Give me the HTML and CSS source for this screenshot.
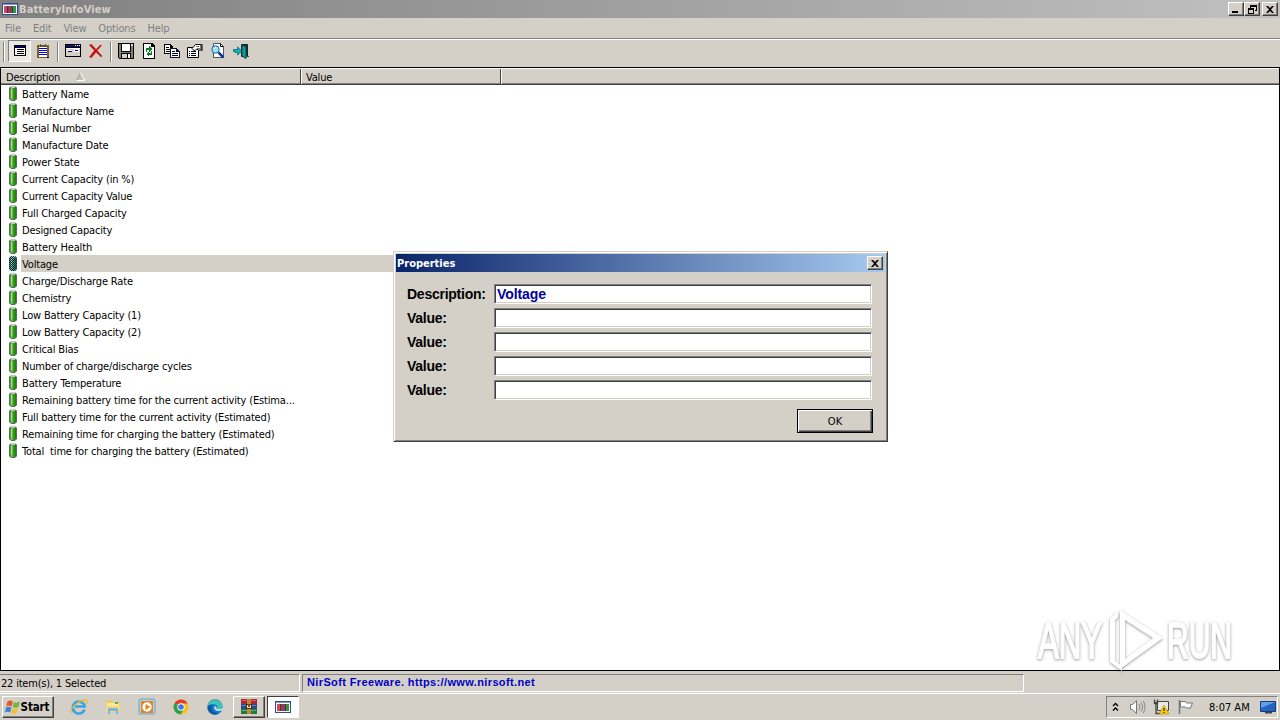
FILE: index.html
```html
<!DOCTYPE html>
<html lang="en">
<head>
    <meta charset="UTF-8">
    <meta name="viewport" content="width=device-width, initial-scale=1.0">
    <title>BatteryInfoView</title>
    <link rel="stylesheet" href="styles.css">
</head>
<body>
    <!-- shared icons -->
    <svg class="defs" width="0" height="0">
        <defs>
            <linearGradient id="green" x1="0" x2="1" y1="0" y2="0">
                <stop offset="0" stop-color="#2c7c1c"/>
                <stop offset="0.35" stop-color="#7cc860"/>
                <stop offset="0.55" stop-color="#38a01c"/>
                <stop offset="1" stop-color="#226c14"/>
            </linearGradient>
            <pattern id="dots" width="2" height="2" patternUnits="userSpaceOnUse">
                <rect width="1" height="1" fill="#0a246a"/>
                <rect x="1" y="1" width="1" height="1" fill="#0a246a"/>
            </pattern>
            <symbol id="battery" viewBox="0 0 10 16">
                <path d="M3 1.500h4l1.500 1.500v11l-1.500 1.500H3L1.500 14V3z" fill="url(#green)" stroke="#56705a" stroke-width="1"/>
                <path d="M3 1h4v2H3z" fill="#c4c8c4"/>
                <path d="M3.500 4v9" stroke="#a6e48c"/>
            </symbol>
            <symbol id="app" viewBox="0 0 16 14">
                <rect x="0.500" y="1.500" width="15" height="11" fill="#fff" stroke="#34508c"/>
                <path d="M1 2.500h14" stroke="#7c98d0"/>
                <rect x="2" y="4" width="3" height="7" fill="#d04858"/>
                <rect x="6" y="4" width="4" height="7" fill="#a03850"/>
                <rect x="11" y="4" width="3" height="7" fill="#2c9a38"/>
                <path d="M5.500 4v7M10.500 4v7" stroke="#303868"/>
            </symbol>
            <symbol id="close" viewBox="0 0 8 7">
                <path d="M0 0h2l2 2 2-2h2L5 3.500 8 7H6L4 5 2 7H0l3-3.500z" fill="#000"/>
            </symbol>
        </defs>
    </svg>

    <div class="window">
        <div class="titlebar">
            <svg class="app-icon" width="16" height="14"><use href="#app"/></svg>
            <span class="title-text">BatteryInfoView</span>
            <div class="title-buttons">
                <button class="win-btn"><svg width="8" height="8"><path d="M0 6h6v2H0z"/></svg></button>
                <button class="win-btn"><svg width="9" height="9" shape-rendering="crispEdges"><path d="M2 0h7v6H7V5h1V2H3v1H2z"/><path d="M0 3h6v6H0zM1 5v3h4V5z" fill-rule="evenodd"/></svg></button>
                <button class="win-btn gap"><svg width="8" height="7"><use href="#close"/></svg></button>
            </div>
        </div>

        <div class="menubar">
            <span>File</span>
            <span>Edit</span>
            <span>View</span>
            <span>Options</span>
            <span>Help</span>
        </div>

        <div class="toolbar">
            <div class="sep"></div>
            <div class="tool pressed">
                <svg width="16" height="16" shape-rendering="crispEdges"><path d="M2 2h12v11H2z" fill="#000"/><path d="M3 5h10v7H3z" fill="#fff"/><path d="M3 3h10v1H3z" fill="#0000a0"/><path d="M5 6h7v1H5zM5 8h7v1H5zM5 10h7v1H5z"/></svg>
            </div>
            <div class="tool">
                <svg width="16" height="16" shape-rendering="crispEdges"><path d="M2 2h12v13H2z" fill="#806020"/><path d="M4 4h8v10H4z" fill="#fff"/><path d="M5 1h6v3H5z" fill="#555"/><path d="M6 1h4v1H6z" fill="#e8d850"/><path d="M4 5h8v1H4zM4 7h8v1H4zM4 9h8v1H4zM4 11h8v1H4z" fill="#0000e0"/><path d="M12 14h2v1h-2z" fill="#000080"/></svg>
            </div>
            <div class="sep wide"></div>
            <div class="tool">
                <svg width="16" height="16" shape-rendering="crispEdges"><path d="M0 1h16v13H0z"/><path d="M1 5h14v8H1z" fill="#d4d0c8"/><path d="M1 2h14v2H1z" fill="#101070"/><path d="M10 2h1v1h-1zM12 2h1v1h-1zM14 2h1v1h-1z" fill="#fff"/><path d="M1 5h14v1H1zM2 7h5v1H2zM9 6h5v3H9z" fill="#fff"/><path d="M3 8h4v1H3zM10 7h3v1h-3z" fill="#0000a0"/></svg>
            </div>
            <div class="tool">
                <svg width="16" height="16"><path d="M1.500 2l2-.5L8 6.500l4.500-4.500 1 .5L9 7.500l5 5.500-1 .8L8 9l-4.500 5.500L1.500 14l5-6.500z" fill="#d80808" stroke="#a80000" stroke-width="0.500"/></svg>
            </div>
            <div class="sep wide"></div>
            <div class="tool">
                <svg width="16" height="16" shape-rendering="crispEdges"><path d="M0 0h15l1 1v15H1l-1-1z"/><path d="M1 1h2v8h10V1h2v14H1z" fill="#808078"/><path d="M4 1h8v7H4z" fill="#fff"/><path d="M13 1h2v2h-2z" fill="#ddd"/><path d="M3 10h10v5H3z"/><path d="M4 11h5v4H4z" fill="#d4d0c8"/><path d="M10 11h2v4h-2z" fill="#fff"/></svg>
            </div>
            <div class="tool">
                <svg width="16" height="16" shape-rendering="crispEdges"><path d="M2 0h9l3 3v13H2z"/><path d="M3 1h7v3h3v11H3z" fill="#fff"/><path d="M10 1h1v2h2v1h-3z"/><g fill="#088028"><path d="M5 5h3V3l3 3-3 3V7H6v2H5z"/><path d="M11 12H8v2l-3-3 3-3v2h2V8h1z"/></g></svg>
            </div>
            <div class="tool">
                <svg width="16" height="16" shape-rendering="crispEdges"><path d="M0 1h6l3 3v7H0z"/><path d="M1 2h5v3h2v5H1z" fill="#fff"/><path d="M2 4h3v1H2zM2 6h5v1H2zM2 8h5v1H2z"/><path d="M6 5h6l4 4v6H6z" fill="#101040"/><path d="M7 6h5v3h3v5H7z" fill="#fff"/><path d="M8 8h3v1H8zM8 10h6v1H8zM8 12h6v1H8z"/></svg>
            </div>
            <div class="tool">
                <svg width="16" height="16"><path d="M.5 4.500h11v10H.5z" fill="#fff" stroke="#000"/><path d="M2 8.500h1m1 0h5M2 10.500h1m1 0h5M2 12.500h1m1 0h5" stroke="#000"/><path d="M5 5.500L8.500 1.500h5.500v5.500h-2.500L9.500 6 7.500 8z" fill="#fff" stroke="#000"/><path d="M9 3.500h3M10 5.500h3" stroke="#777"/><path d="M15 1v7" stroke="#000"/></svg>
            </div>
            <div class="tool">
                <svg width="16" height="16"><path d="M3.500.5h7l3 3v11h-10z" fill="#fff" stroke="#555"/><path d="M10.500.5v3h3" fill="none" stroke="#000"/><circle cx="5.500" cy="6.500" r="3.700" fill="#90e4f4" stroke="#2060a0"/><path d="M8.500 9.500l5 5" stroke="#0838a0" stroke-width="2.500"/><path d="M4 6l2-2" stroke="#fff"/></svg>
            </div>
            <div class="tool">
                <svg width="16" height="16"><path d="M8.500 1.500h6v12h-6z" fill="#053c40" stroke="#222"/><path d="M9 2l4 2v11.500L9 13z" fill="#189a9c" stroke="#044"/><path d="M0 6.500h4.500V4L9 8l-4.500 4V9.500H2v-1H0z" fill="#10b0b8" stroke="#056068" stroke-width="0.700"/><path d="M13 13.500h3" stroke="#444"/></svg>
            </div>
        </div>

        <div class="list">
            <div class="list-header">
                <div class="col col-desc"><span>Description</span><svg class="sort" width="10" height="9"><path d="M1 8L4.500 1l4 7z" fill="#c4c0b8"/><path d="M.5 8.500L4.500.5" stroke="#a0a09c"/><path d="M4.500.5l4 8H.5" fill="none" stroke="#fff"/></svg></div>
                <div class="col col-value">Value</div>
            </div>
            <div class="rows">
                <div class="row"><svg width="10" height="16"><use href="#battery"/></svg><span>Battery Name</span></div>
                <div class="row"><svg width="10" height="16"><use href="#battery"/></svg><span>Manufacture Name</span></div>
                <div class="row"><svg width="10" height="16"><use href="#battery"/></svg><span>Serial Number</span></div>
                <div class="row"><svg width="10" height="16"><use href="#battery"/></svg><span>Manufacture Date</span></div>
                <div class="row"><svg width="10" height="16"><use href="#battery"/></svg><span>Power State</span></div>
                <div class="row"><svg width="10" height="16"><use href="#battery"/></svg><span>Current Capacity (in %)</span></div>
                <div class="row"><svg width="10" height="16"><use href="#battery"/></svg><span>Current Capacity Value</span></div>
                <div class="row"><svg width="10" height="16"><use href="#battery"/></svg><span>Full Charged Capacity</span></div>
                <div class="row"><svg width="10" height="16"><use href="#battery"/></svg><span>Designed Capacity</span></div>
                <div class="row"><svg width="10" height="16"><use href="#battery"/></svg><span>Battery Health</span></div>
                <div class="row selected"><svg width="10" height="16"><use href="#battery"/><path d="M3 1h4l2 2v11l-2 2H3l-2-2V3z" fill="url(#dots)"/></svg><span>Voltage</span></div>
                <div class="row"><svg width="10" height="16"><use href="#battery"/></svg><span>Charge/Discharge Rate</span></div>
                <div class="row"><svg width="10" height="16"><use href="#battery"/></svg><span>Chemistry</span></div>
                <div class="row"><svg width="10" height="16"><use href="#battery"/></svg><span>Low Battery Capacity (1)</span></div>
                <div class="row"><svg width="10" height="16"><use href="#battery"/></svg><span>Low Battery Capacity (2)</span></div>
                <div class="row"><svg width="10" height="16"><use href="#battery"/></svg><span>Critical Bias</span></div>
                <div class="row"><svg width="10" height="16"><use href="#battery"/></svg><span>Number of charge/discharge cycles</span></div>
                <div class="row"><svg width="10" height="16"><use href="#battery"/></svg><span>Battery Temperature</span></div>
                <div class="row"><svg width="10" height="16"><use href="#battery"/></svg><span>Remaining battery time for the current activity (Estima...</span></div>
                <div class="row"><svg width="10" height="16"><use href="#battery"/></svg><span>Full battery time for the current activity (Estimated)</span></div>
                <div class="row"><svg width="10" height="16"><use href="#battery"/></svg><span>Remaining time for charging the battery (Estimated)</span></div>
                <div class="row"><svg width="10" height="16"><use href="#battery"/></svg><span>Total&nbsp; time for charging the battery (Estimated)</span></div>
            </div>
        </div>

        <div class="statusbar">
            <div class="panel panel-count">22 item(s), 1 Selected</div>
            <div class="panel panel-link">NirSoft Freeware. https://www.nirsoft.net</div>
        </div>
    </div>

    <div class="taskbar">
        <button class="start">
            <svg width="16" height="16"><path d="M2.500 2.500Q5 .5 8 2.500L6.800 7.500Q4 5.800 1.200 7.500z" fill="#e8582c"/><path d="M9 3q3 1.500 6-.5L13.500 8q-3 1.500-5.700 0z" fill="#6cb83c"/><path d="M1 8.500q2.500-1.700 5.500 0L5.200 13.500Q2.500 12-.2 13.500z" fill="#3c84d8"/><path d="M7.500 9q3 1.500 5.700 0l-1.400 5q-3 1.500-5.600 0z" fill="#f4c030"/></svg>
            <span>Start</span>
        </button>
        <div class="quick">
            <svg width="18" height="18"><path d="M14.500 11.500a6 6 0 1 1 .2-3H5" fill="none" stroke="#39a5e0" stroke-width="2.600"/><path d="M1 15C-1 12 8 2 15 2c3 0 2 3 1 5" fill="none" stroke="#e8b838" stroke-width="1.300"/></svg>
            <svg width="18" height="18"><path d="M2 2h6l1 2h7v10H2z" fill="#ecca68"/><path d="M3 5h12v8H3z" fill="#fae9a4"/><path d="M2 8h14v6H2z" fill="#f2d780"/><path d="M4 16v-5q0-1 1-1h8q1 0 1 1v5h-2v-3H6v3z" fill="#78b8dc"/><path d="M11 4h3v2h-3z" fill="#60a860"/></svg>
            <svg width="18" height="18"><path d="M2 1h14l1 1v13l-1 1H1V2z" fill="#a8d4ec" stroke="#6ca4c8"/><rect x="3" y="3" width="12" height="12" fill="#f08018"/><circle cx="9" cy="9" r="4.700" fill="#fff"/><path d="M7.500 6l5 3-5 3z" fill="#f08018"/></svg>
            <svg width="18" height="18"><circle cx="9" cy="9" r="7.500" fill="#fbc116"/><path d="M9 9L2.500 5.200A7.500 7.500 0 0 1 15.600 5.500H9z" fill="#e33b2e"/><path d="M9 9L2.500 5.200A7.500 7.500 0 0 0 8.600 16.500L12 11z" fill="#2da04c"/><circle cx="9" cy="9" r="3.700" fill="#fff"/><circle cx="9" cy="9" r="2.800" fill="#3c78e8"/></svg>
            <svg width="18" height="18"><circle cx="9" cy="9" r="7.700" fill="#1680d0"/><path d="M1.500 8C3 0 15 0 16.700 8c0 3-3 4-6 3 2-2 0-5-3-5S2 7 1.500 8z" fill="#40c4b0"/><path d="M7 7c-3 3 0 8 6 8-5 4-11 0-11.500-5C2 7 5 6 7 7z" fill="#0c59a4"/><path d="M9 8c-2 3 1 6 6 4.500l2-1V10q-3 2-6.500 1 1-1.500-1.500-3z" fill="#d4e8e8"/></svg>
        </div>
        <div class="task">
            <svg width="18" height="16" shape-rendering="crispEdges"><path d="M1 0h16v5H1z" fill="#a82838"/><path d="M1 5h16v5H1z" fill="#304890"/><path d="M1 10h16v5H1z" fill="#267838"/><path d="M2 1h14v1H2z" fill="#dc6070"/><path d="M2 6h14v1H2z" fill="#6880c8"/><path d="M2 11h14v1H2z" fill="#60b070"/><path d="M7 0h4v15H7z" fill="#c08830"/><path d="M6 5h6v5H6z" fill="#403020"/><path d="M7 6h4v3H7z" fill="#eee0b0"/><path d="M8 5h2v3H8z" fill="#605040"/></svg>
        </div>
        <div class="task active">
            <svg width="16" height="14"><use href="#app"/></svg>
        </div>
        <div class="tray">
            <svg class="chevrons" width="7" height="10"><path d="M1 4l2.500-2.500L6 4M1 8.500L3.500 6 6 8.500" fill="none" stroke="#000" stroke-width="1.400"/></svg>
            <svg class="speaker" width="17" height="16"><path d="M1.500 5.500h2l4-4v13l-4-4h-2z" fill="#fff" stroke="#777"/><path d="M10 5q2 3 0 6M12.300 3.500q3 4.500 0 9M14.300 2q3.500 6 0 12" fill="none" stroke="#888"/></svg>
            <svg class="network" width="17" height="16"><path d="M4.500 2.500h11v9h-11z" fill="#e8e8e8" stroke="#444"/><path d="M1.500.5v4h3v-4M3 4.500v10h5M1 3.500h4" fill="none" stroke="#444" stroke-width="1.300"/><path d="M11 6l5 9H6z" fill="#f8cc10" stroke="#b89000" stroke-width="0.600"/><path d="M11 9v3M11 13v1" stroke="#000"/></svg>
            <svg class="flag" width="17" height="16"><path d="M2.500 1v14" stroke="#777" stroke-width="1.600"/><path d="M3.500 2.500h5l1 1.500h6l-2 5h-4L8.500 8h-5z" fill="#fff" stroke="#777"/></svg>
            <span class="clock">8:07 AM</span>
            <svg class="desktop" width="16" height="14"><path d="M.5 1.500h15v10H.5z" fill="#2464c0" stroke="#183c78"/><path d="M1 2h14L1 8z" fill="#60a0e8"/><path d="M5 12h7v1.500H5z" fill="#444"/></svg>
        </div>
    </div>

    <!-- Properties dialog -->
    <div class="dialog">
        <div class="dialog-title">
            <span>Properties</span>
            <button class="win-btn"><svg width="8" height="7"><use href="#close"/></svg></button>
        </div>
        <div class="dialog-body">
            <div class="field"><label>Description:</label><div class="input">Voltage</div></div>
            <div class="field"><label>Value:</label><div class="input"></div></div>
            <div class="field"><label>Value:</label><div class="input"></div></div>
            <div class="field"><label>Value:</label><div class="input"></div></div>
            <div class="field"><label>Value:</label><div class="input"></div></div>
            <button class="ok"><span>OK</span></button>
        </div>
    </div>

    <!-- watermark -->
    <svg class="watermark" width="204" height="72" viewBox="0 0 204 72">
        <text x="4" y="55" textLength="64" lengthAdjust="spacingAndGlyphs">ANY</text>
        <path d="M86 7L129 35 86 66zM91 17v39l28-21z" fill-rule="evenodd"/>
        <path d="M76 15l8-6v5l-3 3v41l7 5v5L76 59z"/>
        <text x="133" y="55" textLength="65" lengthAdjust="spacingAndGlyphs">RUN</text>
    </svg>
</body>
</html>
```
FILE: styles.css
```css
* {
    box-sizing: border-box;
}

body {
    margin: 0;
    width: 1280px;
    height: 720px;
    overflow: hidden;
    display: flex;
    flex-direction: column;
    background: #d4d0c8;
    color: #000;
    font-family: "DejaVu Sans Condensed", "DejaVu Sans", sans-serif;
    font-stretch: condensed;
    font-size: 11px;
    line-height: 13px;
    white-space: nowrap;
}

svg {
    display: block;
    flex: none;
}

.defs {
    position: absolute;
}

button {
    font: inherit;
    color: #000;
    padding: 0;
    margin: 0;
    display: flex;
    align-items: center;
    justify-content: center;
    background: #d4d0c8;
    border: 1px solid;
    border-color: #fff #404040 #404040 #fff;
    box-shadow: inset -1px -1px #808080;
}

.window {
    height: 693px;
    display: flex;
    flex-direction: column;
}

/* title bar */
.titlebar {
    height: 18px;
    display: flex;
    align-items: center;
    padding: 0 2px;
    background: linear-gradient(to right, #808080, #c0c0c0);
    color: #d4d0c8;
    font-weight: bold;
}

.title-text {
    margin-left: 1px;
    letter-spacing: 0.1px;
}

.title-buttons {
    margin-left: auto;
    display: flex;
}

.win-btn {
    width: 16px;
    height: 14px;
}

.win-btn.gap {
    margin-left: 2px;
}

.menubar {
    height: 20px;
    display: flex;
    align-items: center;
    gap: 12px;
    padding-left: 5px;
    color: #808080;
    letter-spacing: -0.15px;
}

/* toolbar */
.toolbar {
    height: 29px;
    display: flex;
    align-items: flex-start;
    padding: 1px 0 0 3px;
    border-top: 1px solid #808080;
    box-shadow: inset 0 1px #fff;
}

.sep {
    width: 2px;
    height: 20px;
    margin: 2px 3px 0 0;
    border-left: 1px solid #808080;
    border-right: 1px solid #fff;
}

.sep.wide {
    margin: 2px 2px 0 3px;
}

.tool {
    width: 23px;
    height: 22px;
    display: flex;
    align-items: center;
    justify-content: center;
}

.tool.pressed {
    border: 1px solid;
    border-color: #808080 #fff #fff #808080;
    background: #ebe9e4;
}

/* list view */
.list {
    height: 604px;
    border: 1px solid #000;
    background: #fff;
}

.list-header {
    height: 17px;
    display: flex;
    background: #d4d0c8;
    border-top: 1px solid #fff;
    border-bottom: 1px solid #404040;
    box-shadow: inset 0 -1px #808080;
}

.col {
    display: flex;
    align-items: center;
    padding: 1px 0 0 5px;
    border-right: 1px solid #404040;
    box-shadow: 1px 0 #fff;
    letter-spacing: -0.2px;
}

.col-desc {
    width: 300px;
}

.col-value {
    width: 200px;
}

.sort {
    margin-left: 16px;
    margin-top: -2px;
}

.row {
    height: 17px;
    display: flex;
    align-items: flex-start;
    padding-left: 7px;
    letter-spacing: -0.16px;
}

.row span {
    width: 479px;
    height: 17px;
    line-height: 17px;
    margin-left: 3px;
    padding: 1px 0 0 1px;
}

.row.selected span {
    background: #d4d0c8;
}

/* status bar */
.statusbar {
    height: 22px;
    display: flex;
    gap: 2px;
    padding-top: 3px;
}

.panel {
    height: 18px;
    padding: 2px 0 0 1px;
    border: 1px solid;
    border-color: #808080 #fff #fff #808080;
}

.panel-count {
    width: 300px;
    border-left: none;
    letter-spacing: -0.2px;
}

.panel-link {
    width: 722px;
    padding: 1px 0 0 4px;
    font-family: "Liberation Sans", Arial, sans-serif;
    font-weight: bold;
    letter-spacing: 0.37px;
    color: #0000c8;
}

/* taskbar */
.taskbar {
    height: 27px;
    display: flex;
    align-items: flex-start;
    padding: 2px 2px 0;
    border-top: 1px solid #fff;
}

.start {
    width: 52px;
    height: 22px;
    padding-right: 2px;
    font-weight: bold;
    font-size: 11.5px;
    letter-spacing: -0.1px;
}

.quick {
    display: flex;
    gap: 16px;
    padding: 2px 0 0 16px;
}

.task {
    width: 32px;
    height: 22px;
    margin-left: 9px;
    display: flex;
    align-items: center;
    justify-content: center;
    border: 1px solid;
    border-color: #fff #404040 #404040 #fff;
    box-shadow: inset -1px -1px #808080;
}

.task.active {
    margin-left: 2px;
    background: #fff;
    border-color: #404040 #fff #fff #404040;
    box-shadow: none;
}

.tray {
    width: 172px;
    height: 22px;
    margin-left: auto;
    display: flex;
    align-items: center;
    border: 1px solid;
    border-color: #808080 #fff #fff #808080;
    padding-left: 5px;
}

.speaker {
    margin-left: 10px;
}

.network,
.flag {
    margin-left: 7px;
}

.clock {
    margin-left: 15px;
}

.desktop {
    margin-left: 10px;
}

/* dialog */
.dialog {
    position: absolute;
    left: 393px;
    top: 251px;
    width: 495px;
    height: 191px;
    padding: 2px;
    background: #d4d0c8;
    border: 1px solid;
    border-color: #d4d0c8 #404040 #404040 #d4d0c8;
    box-shadow: inset 1px 1px #fff, inset -1px -1px #808080;
}

.dialog-title {
    height: 18px;
    display: flex;
    align-items: center;
    justify-content: space-between;
    padding: 0 2px 0 1px;
    background: linear-gradient(to right, #0a246a, #a6caf0);
    color: #fff;
    font-weight: bold;
}

.dialog-body {
    padding: 12px 12px 0 11px;
}

.field {
    display: flex;
    align-items: center;
    height: 20px;
    margin-bottom: 4px;
    font-family: "Liberation Sans", Arial, sans-serif;
    font-size: 14px;
    font-weight: bold;
}

.field label {
    width: 87px;
    letter-spacing: -0.25px;
}

.input {
    width: 378px;
    height: 20px;
    padding-left: 2px;
    line-height: 19px;
    letter-spacing: -0.1px;
    color: #0000a0;
    background: #fff;
    border: 1px solid;
    border-color: #808080 #fff #fff #808080;
    box-shadow: inset 1px 1px #404040, inset -1px -1px #d4d0c8;
}

.ok {
    width: 76px;
    height: 24px;
    margin: 9px -1px 0 auto;
    transform: translateX(-1px);
    border-color: #000;
    box-shadow: inset 1px 1px #fff, inset -1px -1px #404040, inset -2px -2px #808080;
}

/* watermark */
.watermark {
    position: absolute;
    left: 1034px;
    top: 603px;
    overflow: visible;
    fill: #fff;
    filter: drop-shadow(0 1px 1.5px rgba(0, 0, 0, 0.4));
}

.watermark text {
    font-family: "Liberation Sans", Arial, sans-serif;
    font-size: 50px;
    stroke: #fff;
    stroke-width: 2px;
}
```
